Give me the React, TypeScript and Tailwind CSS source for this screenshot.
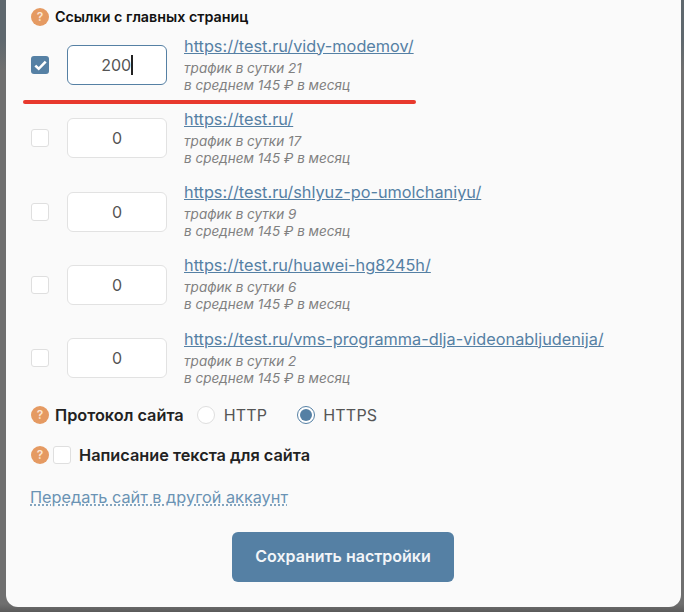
const rows = [
  { url: "https://test.ru/vidy-modemov/", traffic: 21, value: "200", checked: true },
  { url: "https://test.ru/", traffic: 17, value: "0" },
  { url: "https://test.ru/shlyuz-po-umolchaniyu/", traffic: 9, value: "0" },
  { url: "https://test.ru/huawei-hg8245h/", traffic: 6, value: "0" },
  { url: "https://test.ru/vms-programma-dlja-videonabljudenija/", traffic: 2, value: "0" },
];

function Help() {
  return (
    <span className="flex h-[18px] w-[18px] shrink-0 items-center justify-center rounded-full bg-[#e59a62] text-[12px] font-semibold leading-none text-[#fbe6d6]">
      ?
    </span>
  );
}

function Box({ checked }: { checked?: boolean }) {
  return checked ? (
    <span className="flex h-[18px] w-[18px] shrink-0 items-center justify-center rounded-[3px] bg-[#5580a4]">
      <svg width="13" height="11" viewBox="0 0 13 11" fill="none">
        <path d="M1.3 5.6 4.7 8.8 11.7 1.6" stroke="#fff" strokeWidth="2.6" />
      </svg>
    </span>
  ) : (
    <span className="h-[18px] w-[18px] shrink-0 rounded-[3px] border border-[#dfdfdf] bg-white" />
  );
}

export default function App() {
  return (
    <div className="h-[612px] w-[684px] overflow-hidden bg-[linear-gradient(#5f686e_0,#5f686e_40px,#6f6f6f_70px,#6f6f6f_604px,#5a5a5a_612px)] font-['Inter',sans-serif]">
      <div className="relative ml-[6px] h-[607px] w-[675px] rounded-br-[12px] rounded-bl-[12px] bg-[#fafafa] pl-[25px] pt-[7px]">
        <div className="flex h-[19px] items-center gap-[6px]">
          <Help />
          <span className="text-[14.3px] font-semibold leading-[19px] text-[#111]">Ссылки с главных страниц</span>
        </div>
        <div className="mt-[9px] flex flex-col gap-[13.25px]">
          {rows.map((r) => (
            <div key={r.url} className="flex h-[60px] items-center">
              <Box checked={r.checked} />
              <div
                className={`ml-[18px] flex h-[40px] w-[100px] shrink-0 items-center justify-center rounded-[6px] border bg-white text-[16px] text-[#555] ${
                  r.checked ? "border-[#5580a4]" : "border-[#e2e2e2]"
                }`}
              >
                {r.value}
                {r.checked && <span className="h-[20px] w-[1.5px] bg-[#222]" />}
              </div>
              <div className="ml-[17px] flex flex-col">
                <a className="text-[16.3px] leading-[18px] text-[#5580a4] underline">{r.url}</a>
                <span className="mt-[5px] text-[13.5px] italic leading-[17px] text-[#808080]">трафик в сутки {r.traffic}</span>
                <span className="text-[13.5px] italic leading-[17px] text-[#808080]">в среднем 145 ₽ в месяц</span>
              </div>
            </div>
          ))}
        </div>
        <div className="absolute left-[17px] top-[100px] h-[4px] w-[393px] rounded-full bg-[#e8392d]" />
        <div className="mt-[17px] flex h-[20px] items-center">
          <Help />
          <span className="ml-[6px] text-[16.3px] font-semibold text-[#222]">Протокол сайта</span>
          <span className="ml-[13px] h-[18px] w-[18px] rounded-full border border-[#dfdfdf] bg-white" />
          <span className="ml-[9px] text-[16px] tracking-[0.2px] text-[#555]">HTTP</span>
          <span className="ml-[30px] flex h-[18px] w-[18px] items-center justify-center rounded-full border border-[#5580a4] bg-white">
            <span className="h-[12px] w-[12px] rounded-full bg-[#5580a4]" />
          </span>
          <span className="ml-[8px] text-[16px] tracking-[0.2px] text-[#555]">HTTPS</span>
        </div>
        <div className="mt-[20px] flex h-[20px] items-center">
          <Help />
          <span className="ml-[4px] h-[18px] w-[18px] rounded-[3px] border border-[#dfdfdf] bg-white" />
          <span className="ml-[8px] text-[16.3px] font-semibold text-[#222]">Написание текста для сайта</span>
        </div>
        <a className="-ml-[1px] mt-[23px] block w-fit text-[16.3px] leading-[18px] text-[#6a93b4] underline decoration-dotted underline-offset-[2px]">
          Передать сайт в другой аккаунт
        </a>
        <button className="ml-[201px] mt-[26px] block h-[50px] w-[222px] rounded-[6px] bg-[#5580a4] pb-[2px] text-[16px] font-semibold text-[#f2f5f8]">
          Сохранить настройки
        </button>
      </div>
    </div>
  );
}
